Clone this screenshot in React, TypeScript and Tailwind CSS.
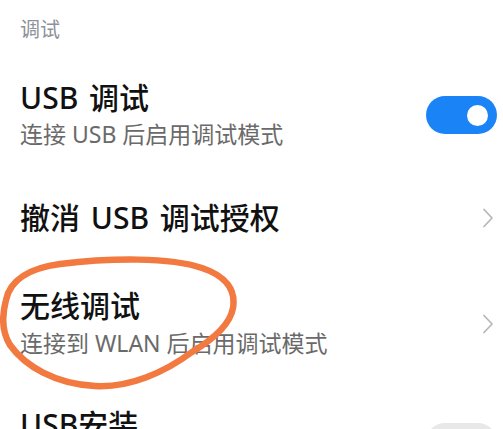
import React from "react";

const font = { fontFamily: '"Noto Sans", "Noto Sans CJK SC", sans-serif' };

function Chevron() {
  return (
    <svg width="14" height="22" viewBox="0 0 14 22" fill="none">
      <path d="M3 2.5 L11 11 L3 19.5" stroke="#b8b8b8" strokeWidth="1.8" strokeLinecap="round" strokeLinejoin="round" />
    </svg>
  );
}

export default function App() {
  return (
    <div className="relative w-full h-[429px] overflow-hidden bg-white" style={font}>
      <div className="pl-[20px] pr-[6px]">
        <div className="pt-[20px] text-[20px] leading-[20px] text-[#8d9199]">调试</div>

        <div className="mt-[44px] flex items-center justify-between">
          <div className="flex flex-col">
            <div className="text-[30px] leading-[28px] font-medium text-[#111] [word-spacing:3px]">USB 调试</div>
            <div className="mt-[10px] text-[23px] leading-[24px] text-[#6a6a6a]">连接 USB 后启用调试模式</div>
          </div>
          <div className="w-[71px] h-[38px] rounded-full bg-[#1a84f7] flex items-center justify-end pr-[9px]">
            <div className="w-[21px] h-[21px] rounded-full bg-white" />
          </div>
        </div>

        <div className="mt-[58px] flex items-center justify-between pr-[2px]">
          <div className="text-[30px] leading-[28px] font-medium text-[#111] [word-spacing:3px]">撤消 USB 调试授权</div>
          <Chevron />
        </div>

        <div className="mt-[60px] flex items-center justify-between pr-[2px]">
          <div className="flex flex-col">
            <div className="text-[30px] leading-[28px] font-medium text-[#111]">无线调试</div>
            <div className="mt-[11px] text-[23px] leading-[24px] text-[#6a6a6a]">连接到 WLAN 后启用调试模式</div>
          </div>
          <Chevron />
        </div>

        <div className="mt-[56px] flex items-start justify-between">
          <div className="text-[30px] leading-[28px] font-medium text-[#111]">USB安装</div>
          <div className="mt-[12px] w-[71px] h-[38px] rounded-full bg-[#e8e8e8]" />
        </div>
      </div>

      <svg className="absolute left-0 top-0 pointer-events-none" width="503" height="429" viewBox="0 0 503 429" fill="none">
        <path
          d="M6 300 C 10 280, 30 268, 60 264 C 110 258, 170 257, 202 268 C 226 276, 236 290, 233 308 C 230 325, 212 340, 192 352 C 165 372, 130 388, 95 386 C 55 384, 25 366, 10 345 C 2 332, 2 315, 6 300 Z"
          stroke="#f27a40"
          strokeWidth="6.5"
          strokeLinecap="round"
          strokeLinejoin="round"
        />
      </svg>
    </div>
  );
}
